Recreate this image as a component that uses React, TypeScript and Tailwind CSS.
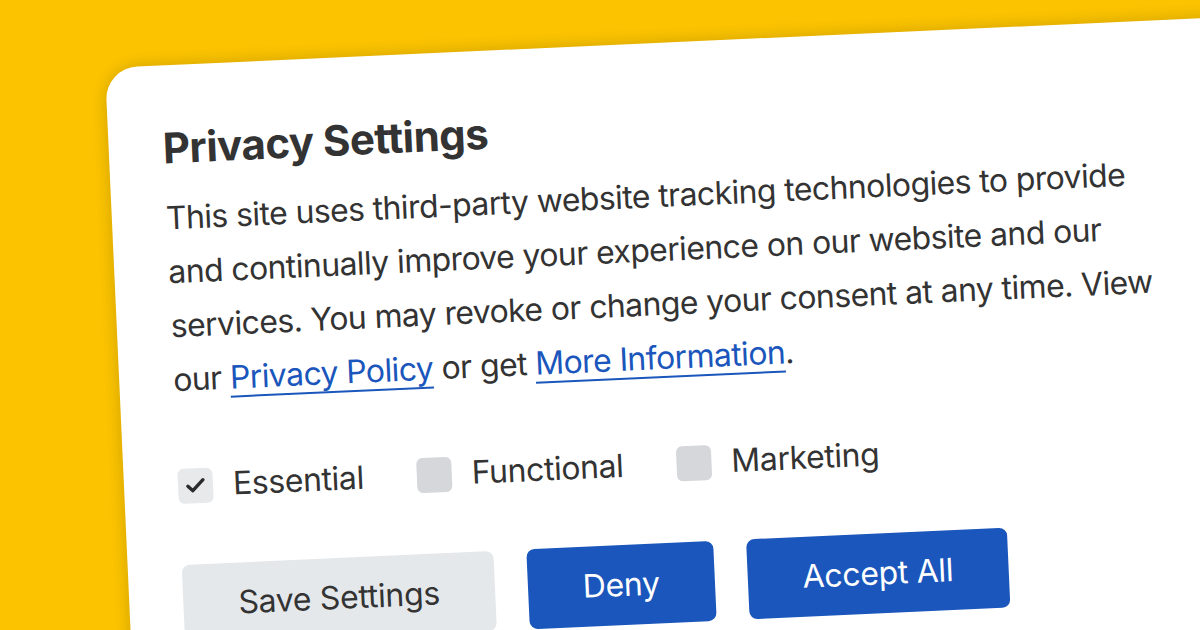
import { Check } from 'lucide-react'

const blue = 'text-[#1a56bb]'

function Box({ checked, label }: { checked?: boolean; label: string }) {
  return (
    <label className="flex items-center gap-[20px]">
      <span
        className={
          checked
            ? 'w-[35px] h-[35px] rounded-[6px] bg-[#e8e9eb] flex items-center justify-center'
            : 'w-[35px] h-[35px] rounded-[6px] bg-[#d5d7db]'
        }
      >
        {checked && <Check className="w-[23px] h-[23px] text-[#2b2b2b]" strokeWidth={3.5} />}
      </span>
      <span className="text-[32px] leading-[36px] tracking-[-0.4px]">{label}</span>
    </label>
  )
}

export default function App() {
  return (
    <div className="w-[1200px] h-[630px] overflow-hidden bg-[#fcc400] font-['Inter',sans-serif] text-[#333333]">
      <div className="ml-[105px] mt-[68px] w-[1180px] h-[720px] origin-top-left rotate-[-2.6deg] rounded-[32px] bg-white shadow-[0_0_18px_rgba(0,0,0,0.18)] pl-[54px] pt-[58px]">
        <h1 className="text-[42px] leading-[50px] font-bold tracking-[-0.5px]">Privacy Settings</h1>

        <p className="mt-[18px] text-[32px] leading-[54px] tracking-[-0.6px]">
          This site uses third-party website tracking technologies to provide
          <br />
          and continually improve your experience on our website and our
          <br />
          services. You may revoke or change your consent at any time. View
          <br />
          our{' '}
          <a className={`${blue} underline decoration-2 underline-offset-[7px]`}>Privacy Policy</a>{' '}
          or get{' '}
          <a className={`${blue} underline decoration-2 underline-offset-[7px]`}>More Information</a>.
        </p>

        {/* Consent toggles */}
        <div className="mt-[61px] flex items-center gap-[53px]">
          <Box checked label="Essential" />
          <Box label="Functional" />
          <Box label="Marketing" />
        </div>

        <div className="mt-[61px] flex gap-[33px] text-[32px] tracking-[-0.3px]">
          <button className="h-[80px] px-[55px] rounded-[8px] bg-[#e5e8eb]">Save Settings</button>
          <button className="h-[80px] px-[55px] rounded-[8px] bg-[#1a56bb] text-white">Deny</button>
          <button className="h-[80px] px-[55px] rounded-[8px] bg-[#1a56bb] text-white">Accept All</button>
        </div>
      </div>
    </div>
  )
}
